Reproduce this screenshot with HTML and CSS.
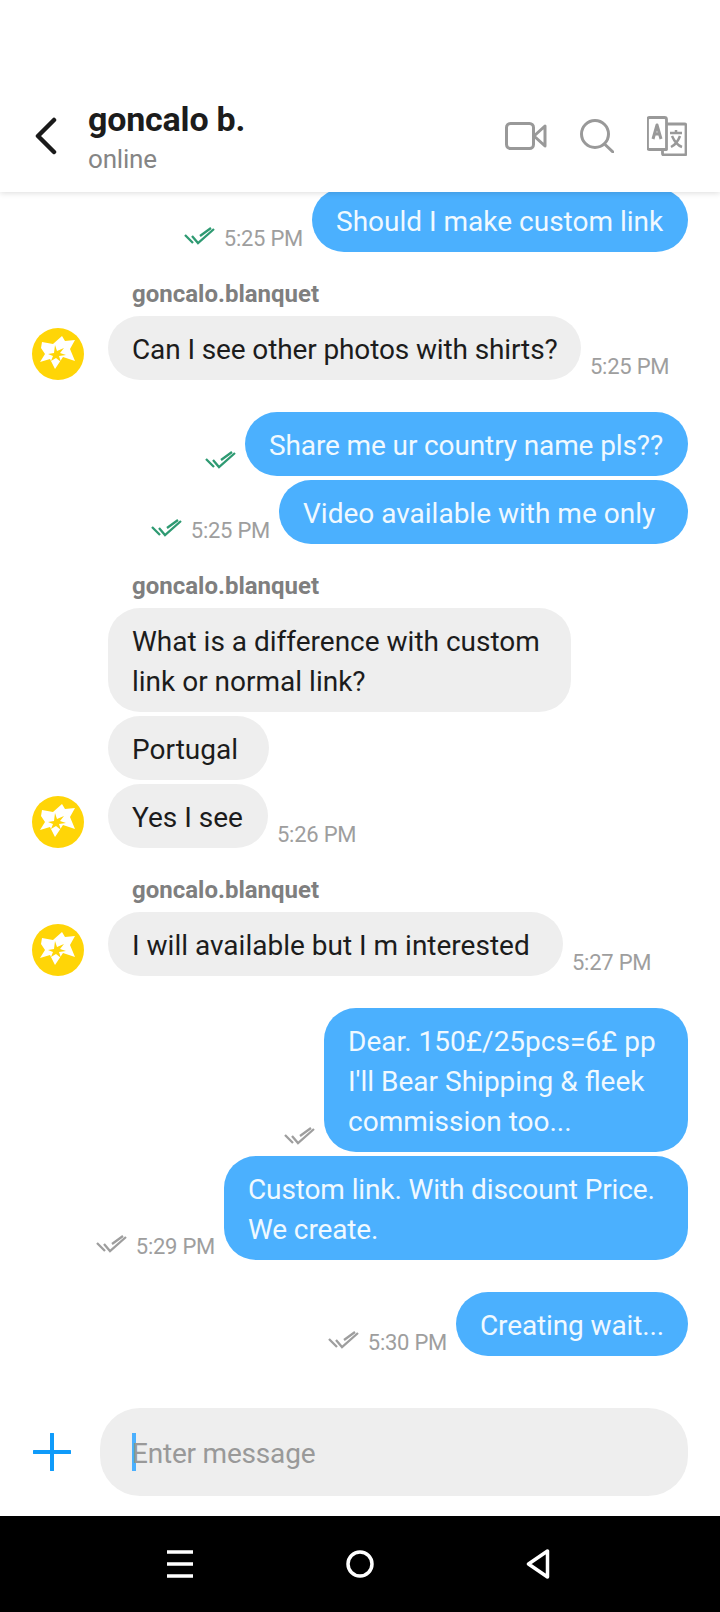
FILE: index.html
```html
<!DOCTYPE html>
<html lang="en">
<head>
  <meta charset="utf-8">
  <title>goncalo b.</title>
  <link rel="stylesheet" href="styles.css">
</head>
<body>
<svg class="defs" width="0" height="0">
  <symbol id="ticks" viewBox="0 0 31 18">
    <path d="M1 8l8 8M8 9l6 7L30 2M16 9L27 1" fill="none" stroke="currentColor" stroke-width="2.300"/>
  </symbol>
  <symbol id="burst" viewBox="0 0 52 52">
    <circle cx="26" cy="26" r="26" fill="#ffd507"/>
    <path d="M10 14l11 2 9-8 3 5 10-1-5 9 5 12-12-4-8 12-5-10-10 3 5-8-4-6z" fill="#fff"/>
    <path d="M23 17l2 6 7-3-4 5 6 2-7 1 2 6-5-4-5 3 2-5-5-2 6-1z" fill="#ffd507"/>
  </symbol>
</svg>

<div class="app">
  <header class="topbar">
    <svg class="back" viewBox="0 0 24 38"><path d="M20 3L4 19l16 16" fill="none" stroke="#1a1a1a" stroke-width="4.500" stroke-linecap="round" stroke-linejoin="round"/></svg>
    <div class="who">
      <div class="who-name">goncalo b.</div>
      <div class="who-status">online</div>
    </div>
    <div class="actions">
      <svg class="ic-video" viewBox="0 0 42 28"><g fill="none" stroke="#999" stroke-width="3" stroke-linejoin="round"><rect x="1.500" y="1.500" width="27" height="25" rx="4"/><path d="M40 4v20L29 14z"/></g></svg>
      <svg class="ic-search" viewBox="0 0 34 34"><g fill="none" stroke="#999" stroke-width="3" stroke-linecap="round"><circle cx="15" cy="15" r="13.500"/><path d="M24.500 25L33 33"/></g></svg>
      <svg class="ic-translate" viewBox="0 0 40 40"><g fill="none" stroke="#999" stroke-linejoin="round"><path d="M2.500 1.500h15q2 0 2 2v30h-17q-2 0-2-2v-28q0-2 2-2z" stroke-width="2.800"/><path d="M20 8h17.500q1.500 0 1.500 1.500v28q0 1.500-1.500 1.500H17q-1.500 0-1.500-1.500V34" stroke-width="2.800"/><path d="M6 23l4-14 4 14M7.500 18h5" stroke-width="3"/><path d="M23 17h12M29 14v3M25 20q4 9 10 11M33 20q-3 8-9 11" stroke-width="2.500"/></g></svg>
    </div>
  </header>

  <main class="chat">
    <div class="row out">
      <span class="meta read"><svg class="tick"><use href="#ticks"/></svg><span class="time">5:25 PM</span></span>
      <div class="bubble w376">Should I make custom link</div>
    </div>

    <div class="group">
      <div class="sender">goncalo.blanquet</div>
      <div class="row in">
        <svg class="avatar"><use href="#burst"/></svg>
        <div class="bubble w473 tight">Can I see other photos with shirts?</div>
        <span class="meta"><span class="time">5:25 PM</span></span>
      </div>
    </div>

    <div class="group">
      <div class="row out">
        <span class="meta read"><svg class="tick"><use href="#ticks"/></svg></span>
        <div class="bubble w443 tight">Share me ur country name pls??</div>
      </div>
      <div class="row out">
        <span class="meta read"><svg class="tick"><use href="#ticks"/></svg><span class="time">5:25 PM</span></span>
        <div class="bubble w409">Video available with me only</div>
      </div>
    </div>

    <div class="group">
      <div class="sender">goncalo.blanquet</div>
      <div class="row in">
        <span class="avatar-gap"></span>
        <div class="bubble w463">What is a difference with custom<br>link or normal link?</div>
      </div>
      <div class="row in">
        <span class="avatar-gap"></span>
        <div class="bubble w161">Portugal</div>
      </div>
      <div class="row in">
        <svg class="avatar"><use href="#burst"/></svg>
        <div class="bubble w160">Yes I see</div>
        <span class="meta"><span class="time">5:26 PM</span></span>
      </div>
    </div>

    <div class="group">
      <div class="sender">goncalo.blanquet</div>
      <div class="row in">
        <svg class="avatar"><use href="#burst"/></svg>
        <div class="bubble w455">I will available but I m interested</div>
        <span class="meta"><span class="time">5:27 PM</span></span>
      </div>
    </div>

    <div class="group">
      <div class="row out">
        <span class="meta"><svg class="tick"><use href="#ticks"/></svg></span>
        <div class="bubble w364">Dear. 150£/25pcs=6£ pp<br>I'll Bear Shipping &amp; fleek<br>commission too...</div>
      </div>
      <div class="row out">
        <span class="meta"><svg class="tick"><use href="#ticks"/></svg><span class="time">5:29 PM</span></span>
        <div class="bubble w464 tight">Custom link. With discount Price.<br>We create.</div>
      </div>
    </div>

    <div class="group">
      <div class="row out">
        <span class="meta"><svg class="tick"><use href="#ticks"/></svg><span class="time">5:30 PM</span></span>
        <div class="bubble w232 tight">Creating wait...</div>
      </div>
    </div>
  </main>

  <footer class="composer">
    <svg class="plus" viewBox="0 0 38 38"><path d="M19 1v36M1 19h36" stroke="#0f9bfa" stroke-width="4" stroke-linecap="round"/></svg>
    <div class="input"><span class="caret"></span><span class="placeholder">Enter message</span></div>
  </footer>

  <nav class="navbar">
    <svg class="nav-menu" viewBox="0 0 26 28"><path d="M0 2h26M0 14h26M0 26h26" stroke="#fff" stroke-width="3.500"/></svg>
    <svg class="nav-home" viewBox="0 0 28 28"><circle cx="14" cy="14" r="12" fill="none" stroke="#fff" stroke-width="3.500"/></svg>
    <svg class="nav-back" viewBox="0 0 24 30"><path d="M21.500 2v26L2.500 15z" fill="none" stroke="#fff" stroke-width="3.500" stroke-linejoin="round"/></svg>
  </nav>
</div>
</body>
</html>
```

FILE: styles.css
```css
* {
  box-sizing: border-box;
}

html, body {
  margin: 0;
  padding: 0;
  background: #fff;
}

body {
  font-family: Roboto, "Noto Sans", sans-serif;
  color: #1c1c1c;
}

.defs {
  position: absolute;
}

.app {
  width: 720px;
  height: 1612px;
  display: flex;
  flex-direction: column;
  overflow: hidden;
}

/* top bar */
.topbar {
  position: relative;
  z-index: 2;
  height: 192px;
  flex: none;
  padding: 90px 33px 0 36px;
  display: flex;
  align-items: center;
  background: #fff;
  box-shadow: 0 1px 6px rgba(0, 0, 0, 0.14);
}

.back {
  width: 24px;
  height: 38px;
  flex: none;
  margin-left: -2px;
  margin-top: -11px;
}

.who {
  margin-left: 30px;
  margin-top: -6px;
}

.who-name {
  font-size: 34px;
  line-height: 40px;
  font-weight: 700;
  letter-spacing: -0.2px;
  color: #1c1c1c;
}

.who-status {
  margin-top: 2px;
  font-size: 26px;
  line-height: 36px;
  letter-spacing: -0.2px;
  color: #858585;
}

.actions {
  margin-left: auto;
  display: flex;
  align-items: center;
  gap: 33px;
  margin-top: -10px;
}

.ic-video {
  width: 42px;
  height: 28px;
}

.ic-search {
  width: 34px;
  height: 34px;
}

.ic-translate {
  width: 40px;
  height: 40px;
}

/* messages */
.chat {
  flex: 1;
  margin-top: -4px;
  padding: 0 32px;
  display: flex;
  flex-direction: column;
}

.group {
  margin-top: 32px;
  display: flex;
  flex-direction: column;
  gap: 4px;
}

.sender {
  margin-left: 100px;
  margin-bottom: 8px;
  font-size: 24px;
  line-height: 20px;
  font-weight: 700;
  color: #7f7f7f;
}

.row {
  display: flex;
  align-items: flex-end;
}

.row.out {
  justify-content: flex-end;
}

.bubble {
  padding: 14px 0 10px 24px;
  font-size: 28px;
  line-height: 40px;
  border-radius: 32px;
  white-space: nowrap;
  flex: none;
}

/* bubble widths */
.w160 { width: 160px; }
.w161 { width: 161px; }
.w232 { width: 232px; }
.w364 { width: 364px; }
.w376 { width: 376px; }
.w409 { width: 409px; }
.w443 { width: 443px; }
.w455 { width: 455px; }
.w463 { width: 463px; }
.w464 { width: 464px; }
.w473 { width: 473px; }

.tight {
  letter-spacing: -0.12px;
}

.in .bubble {
  background: #eeeeee;
  color: #1c1c1c;
}

.out .bubble {
  background: #4bb0fe;
  color: #f0f9ff;
}

.avatar {
  width: 52px;
  height: 52px;
  flex: none;
  margin-right: 24px;
}

.avatar-gap {
  width: 76px;
  flex: none;
}

.meta {
  display: flex;
  align-items: flex-end;
  gap: 9px;
  color: #9e9e9e;
  margin-bottom: 7px;
}

.out .meta {
  margin-right: 9px;
}

.in .meta {
  margin-left: 9px;
}

.meta.read {
  color: #2e9a72;
}

.tick {
  width: 31px;
  height: 18px;
  flex: none;
}

.time {
  font-size: 22px;
  line-height: 26px;
  letter-spacing: -0.25px;
  color: #9e9e9e;
  margin-bottom: -7px;
}

/* composer */
.composer {
  flex: none;
  height: 128px;
  padding: 20px 32px 20px 33px;
  display: flex;
  align-items: center;
}

.plus {
  width: 38px;
  height: 38px;
  flex: none;
  margin-right: 29px;
}

.input {
  flex: 1;
  height: 88px;
  border-radius: 40px;
  background: #eeeeee;
  padding-left: 32px;
  display: flex;
  align-items: center;
  font-size: 28px;
  color: #999;
}

.caret {
  width: 4px;
  height: 38px;
  background: #4bb0fe;
  margin-right: -4px;
}

.placeholder {
  line-height: 40px;
  margin-top: 4px;
  letter-spacing: -0.2px;
}

/* android nav */
.navbar {
  flex: none;
  height: 96px;
  background: #000;
  display: flex;
  align-items: center;
  padding: 0 170px 0 167px;
  justify-content: space-between;
}

.nav-menu {
  width: 26px;
  height: 28px;
}

.nav-home {
  width: 28px;
  height: 28px;
}

.nav-back {
  width: 24px;
  height: 30px;
}
```
